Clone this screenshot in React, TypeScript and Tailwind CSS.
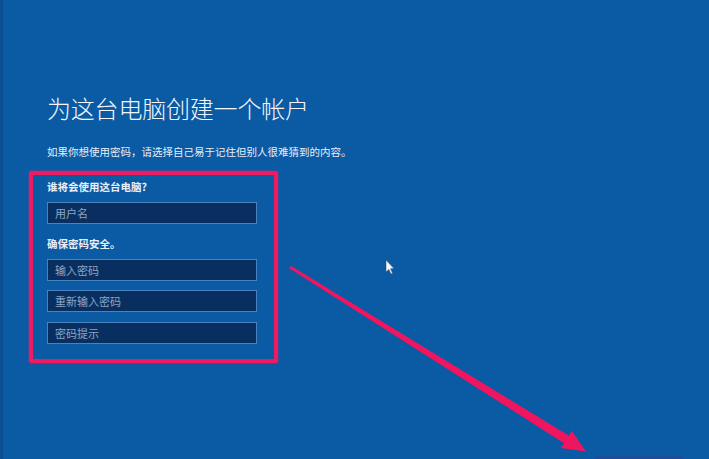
import React from "react";

const font = { fontFamily: '"Noto Sans CJK SC", "Noto Sans", sans-serif' };

function Field({ placeholder, className = "" }: { placeholder: string; className?: string }) {
  return (
    <div
      className={`h-[22px] w-[210px] border-[1.5px] border-[#4a82bd] bg-[#082f5f] flex items-center pl-[7px] text-[11px] text-[#8ea6c6] ${className}`}
    >
      {placeholder}
    </div>
  );
}

export default function App() {
  return (
    <div
      className="relative h-[459px] w-[709px] overflow-hidden bg-[#0b5aa4] border-l-[3px] border-[#094f92] flex flex-col"
      style={font}
    >
      <div className="pl-[44px] pt-[92px]">
        <h1 className="text-[24px] leading-[32px] font-light text-[#f2f6fb] tracking-[-0.2px]">
          为这台电脑创建一个帐户
        </h1>
        <p className="mt-[21px] text-[10.5px] leading-[14px] text-[#e6eef8]">
          如果你想使用密码，请选择自己易于记住但别人很难猜到的内容。
        </p>
      </div>

      <div className="ml-[26px] mt-[12px] w-[249px] border-[4px] border-[#ef1b62] rounded-[2px] pl-[14px] pt-[5px] pb-[15px] shadow-[0_0_3px_rgba(239,27,98,0.6)]">
        <div className="text-[10.5px] leading-[14px] font-bold text-[#e8eff8]">谁将会使用这台电脑?</div>
        <Field placeholder="用户名" className="mt-[8px]" />
        <div className="mt-[13px] text-[10.5px] leading-[14px] font-bold text-[#e8eff8]">确保密码安全。</div>
        <Field placeholder="输入密码" className="mt-[8px]" />
        <Field placeholder="重新输入密码" className="mt-[9px]" />
        <Field placeholder="密码提示" className="mt-[10px]" />
      </div>

      <div className="mt-auto flex justify-end pr-[26px]">
        <div className="h-[3px] w-[88px] bg-[#1d4f98]" />
      </div>

      <svg className="absolute left-0 top-0 pointer-events-none" width="709" height="459" viewBox="0 0 709 459">
        <polygon
          points="287.8,265.7 567.4,436.6 562.6,444.2 286.2,268.3"
          fill="#f0155f"
        />
        <polygon points="583,451.5 568.6,430.8 564,439.5 557.6,448" fill="#f0155f" />
        <path
          d="M383 260 L383 272 L385.8 269.4 L388 274 L389.6 273.2 L387.5 268.8 L391 268.6 Z"
          fill="#f4f6fa"
          stroke="#3a4a6a"
          strokeWidth="0.5"
        />
      </svg>
    </div>
  );
}
